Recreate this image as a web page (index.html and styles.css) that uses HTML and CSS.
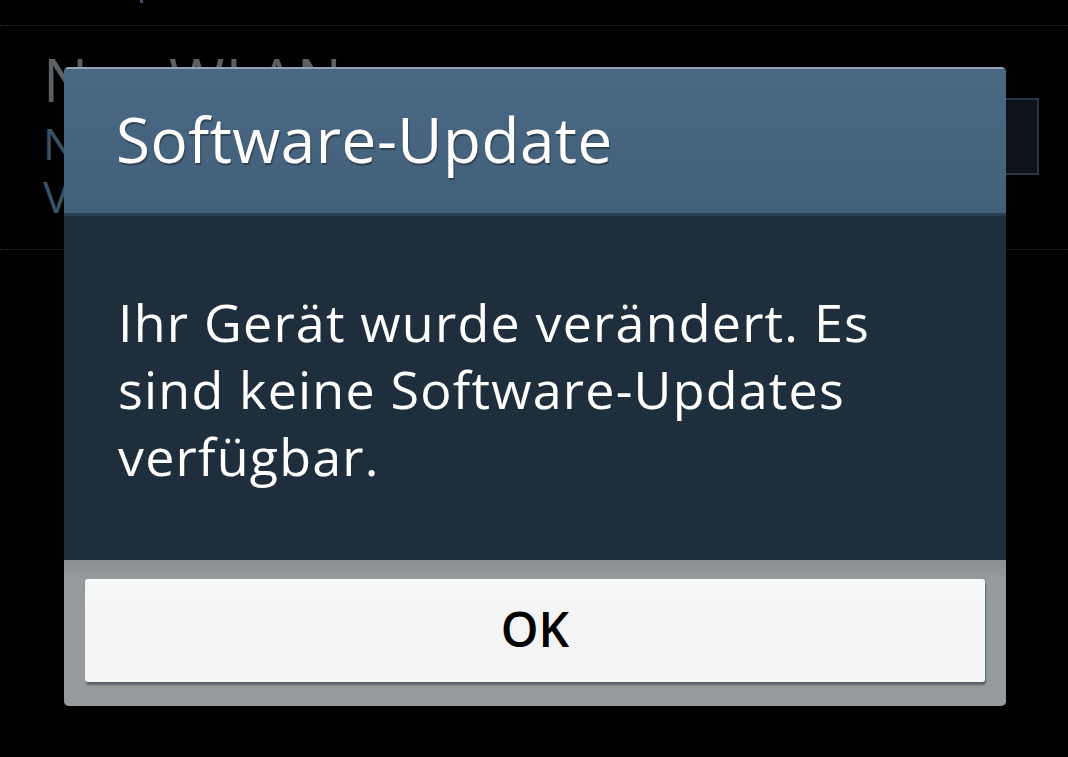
FILE: index.html
```html
<!DOCTYPE html>
<html lang="de">
<head>
    <meta charset="UTF-8">
    <meta name="viewport" content="width=device-width, initial-scale=1.0">
    <title>Software-Update</title>
    <link rel="stylesheet" href="styles.css">
</head>
<body>
    <div class="settings">
        <div class="row-top"><span class="dot"></span></div>
        <div class="setting">
            <div class="setting-text">
                <div class="setting-title">Nur WLAN</div>
                <div class="setting-sub">Nur über WLAN herunterladen</div>
                <div class="setting-sub">Verbindung erforderlich</div>
            </div>
            <div class="checkbox"></div>
        </div>
    </div>

    <div class="dialog">
        <div class="dialog-header">
            <h1 class="dialog-title">Software-Update</h1>
        </div>
        <div class="dialog-body">
            <p class="dialog-message">Ihr Gerät wurde verändert. Es sind keine Software-Updates verfügbar.</p>
        </div>
        <div class="dialog-footer">
            <button class="ok-btn">OK</button>
        </div>
    </div>
</body>
</html>
```

FILE: styles.css
```css
body {
    margin: 0;
    background: #000;
    font-family: "Open Sans", "Noto Sans", sans-serif;
    width: 1068px;
    height: 757px;
    overflow: hidden;
    position: relative;
}

.row-top {
    height: 25px;
    border-bottom: 1px dotted #2a3038;
}

.dot {
    display: block;
    width: 3px;
    height: 3px;
    background: #3d5468;
    margin-left: 140px;
}

.setting {
    height: 223px;
    border-bottom: 1px dotted #2a3038;
    display: flex;
    justify-content: space-between;
    align-items: flex-start;
    padding-left: 43px;
    padding-right: 29px;
}

.setting-text {
    padding-top: 16px;
}

.setting-title {
    font-size: 60px;
    line-height: 75px;
    color: #5b6065;
    letter-spacing: 1px;
}

.setting-sub {
    font-size: 44px;
    line-height: 53px;
    color: #3a5266;
}

.setting-sub:first-of-type {
    margin-top: 2px;
}

.checkbox {
    width: 73px;
    height: 73px;
    margin-top: 72px;
    border: 2px solid #283746;
    background: #0d1318;
}

.dialog {
    position: absolute;
    left: 64px;
    top: 67px;
    width: 942px;
    height: 639px;
    border-radius: 5px;
    overflow: hidden;
    display: flex;
    flex-direction: column;
    box-shadow: inset 2px 0 0 #7b8791, inset -1px 0 0 #6f7c88;
}

.dialog-header {
    height: 149px;
    box-sizing: border-box;
    background: linear-gradient(#4a6884, #46637e 60%, #43607a);
    border-top: 2px solid #8ea3b6;
    border-bottom: 3px solid #2c3f50;
    padding: 39px 0 0 52px;
}

.dialog-title {
    margin: 0;
    font-weight: normal;
    font-size: 62px;
    line-height: 1;
    letter-spacing: 0.5px;
    color: #fff;
    text-shadow: 1px 2px 1px rgba(0, 0, 0, 0.35);
}

.dialog-body {
    height: 344px;
    background: #1e2e3d;
    padding: 0 54px;
    box-sizing: border-box;
}

.dialog-message {
    margin: 0;
    padding-top: 72px;
    font-size: 52px;
    line-height: 67px;
    letter-spacing: 1.2px;
    color: #fff;
}

.dialog-footer {
    flex: 1;
    background: linear-gradient(#8c9195, #959a9d 20px);
    padding: 19px 21px 0 21px;
}

.ok-btn {
    width: 100%;
    height: 103px;
    border: none;
    border-radius: 3px;
    background: linear-gradient(#f8f9f9, #f4f4f4 30%);
    box-shadow: 1px 3px 2px #5c626a;
    font-family: "Open Sans", "Noto Sans", sans-serif;
    font-size: 48px;
    font-weight: 600;
    color: #000;
    padding: 0 0 4px 0;
}
```
